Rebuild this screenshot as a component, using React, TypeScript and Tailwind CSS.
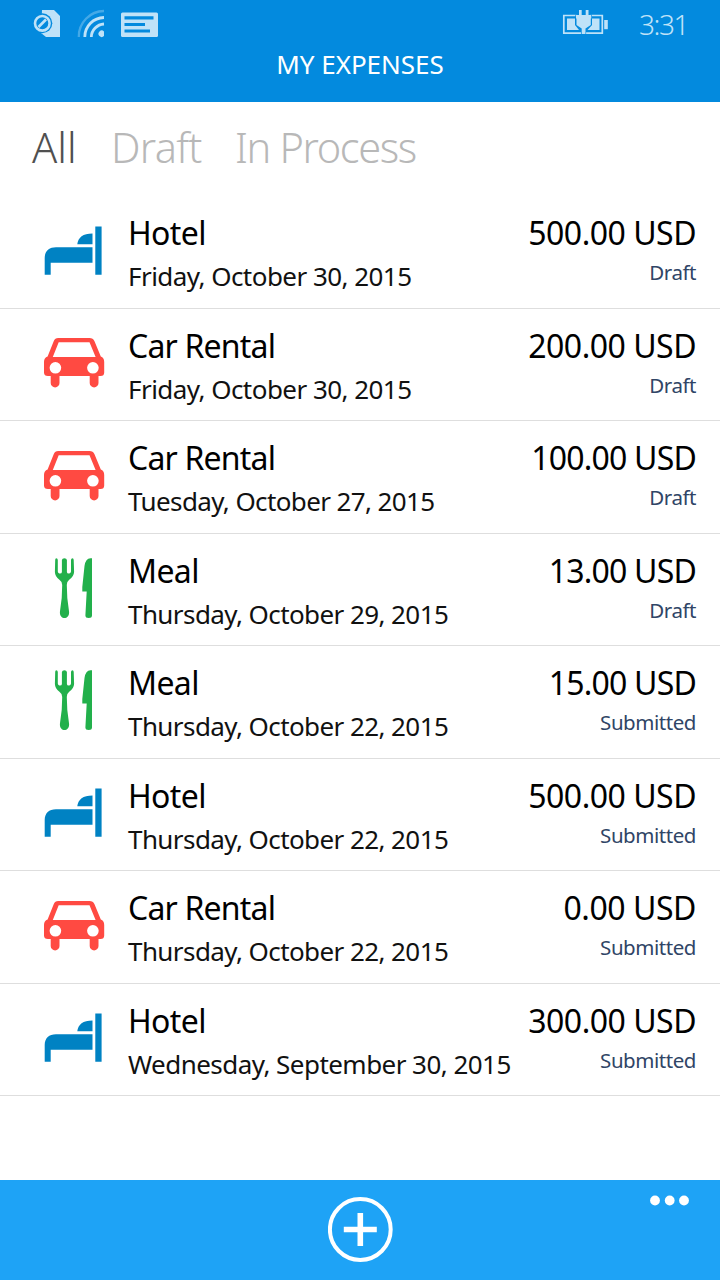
type Kind = 'hotel' | 'car' | 'meal';

interface Expense {
  kind: Kind;
  title: string;
  date: string;
  amount: string;
  status: string;
  dateSpacing: string;
  amountSpacing: string;
}

const expenses: Expense[] = [
  { kind: 'hotel', title: 'Hotel', date: 'Friday, October 30, 2015', amount: '500.00 USD', status: 'Draft', dateSpacing: 'tracking-[-0.54px]', amountSpacing: 'tracking-[-0.5px]' },
  { kind: 'car', title: 'Car Rental', date: 'Friday, October 30, 2015', amount: '200.00 USD', status: 'Draft', dateSpacing: 'tracking-[-0.54px]', amountSpacing: 'tracking-[-0.5px]' },
  { kind: 'car', title: 'Car Rental', date: 'Tuesday, October 27, 2015', amount: '100.00 USD', status: 'Draft', dateSpacing: 'tracking-[-0.61px]', amountSpacing: 'tracking-[-0.8px]' },
  { kind: 'meal', title: 'Meal', date: 'Thursday, October 29, 2015', amount: '13.00 USD', status: 'Draft', dateSpacing: 'tracking-[-0.58px]', amountSpacing: 'tracking-[-0.8px]' },
  { kind: 'meal', title: 'Meal', date: 'Thursday, October 22, 2015', amount: '15.00 USD', status: 'Submitted', dateSpacing: 'tracking-[-0.58px]', amountSpacing: 'tracking-[-0.8px]' },
  { kind: 'hotel', title: 'Hotel', date: 'Thursday, October 22, 2015', amount: '500.00 USD', status: 'Submitted', dateSpacing: 'tracking-[-0.58px]', amountSpacing: 'tracking-[-0.5px]' },
  { kind: 'car', title: 'Car Rental', date: 'Thursday, October 22, 2015', amount: '0.00 USD', status: 'Submitted', dateSpacing: 'tracking-[-0.58px]', amountSpacing: 'tracking-[-0.45px]' },
  { kind: 'hotel', title: 'Hotel', date: 'Wednesday, September 30, 2015', amount: '300.00 USD', status: 'Submitted', dateSpacing: 'tracking-[-0.54px]', amountSpacing: 'tracking-[-0.5px]' },
];

const titleSpacing: Record<Kind, string> = {
  hotel: 'tracking-[-0.6px]',
  car: 'tracking-[-0.8px]',
  meal: 'tracking-[-0.6px]',
};

function HotelIcon() {
  return (
    <svg viewBox="0 0 64 64" className="size-16" fill="#0082c3">
      <path d="M53.300 0.500h6.300v48.300H53.300zM50.500 7.500v10.800H35.300C36 11.500 41 7.500 50.500 7.500zM50.500 21.200v15.500H8.700v12.100H2.700V32C2.700 25 7 21.200 14 21.200z" />
    </svg>
  );
}

function CarIcon() {
  return (
    <svg viewBox="0 0 64 64" className="size-16" fill="#ff4a42">
      <path
        fillRule="evenodd"
        d="M16.200 0H47.500Q51 0 52.500 3.200L58.800 18.500Q62.200 19.800 62.200 24V34.500Q62.200 38 58.500 38H56.500V45A4.400 4.400 0 0 1 47.700 45V38H17.500V45A4.400 4.400 0 0 1 8.700 45V38H6Q2 38 2 34.500V24Q2 19.800 5.600 18.500L11.700 3.200Q13 0 16.200 0ZM16.700 4.300L10.800 19H53.600L47.500 4.300ZM13.400 24A5.800 5.800 0 1 0 13.400 35.600A5.800 5.800 0 1 0 13.400 24ZM50.900 24A5.800 5.800 0 1 0 50.900 35.600A5.800 5.800 0 1 0 50.900 24Z"
      />
    </svg>
  );
}

function MealIcon() {
  return (
    <svg viewBox="0 0 64 64" className="size-16" fill="#22b04b">
      <path d="M14.300 1.200Q15.700 1.200 15.800 3V14.500Q15.900 16.200 17.300 16.500Q19.800 16.800 19.900 15V3Q20.200 1.200 22.400 1.200Q24.600 1.200 24.900 3V15Q25 16.800 27.300 16.500Q28.900 16.200 29 14.500V3Q29.200 1.200 30.400 1.200Q31.700 1.200 31.700 3L32.100 15Q31.800 19.500 27.200 22.700Q24.700 24.500 24.800 28L25.300 41L27.100 55C27.400 63 17.600 63 17.900 55L19.700 41L20.200 28Q20.200 24.500 17.400 22.700Q13 19.500 12.900 15L13.200 3Q13.200 1.200 14.300 1.200Z" />
      <path d="M50 1.200V58.500Q50 61 46.700 61Q43.400 61 43.400 58.500L44.700 34.500H40.300V30L42.500 9Q43.600 1.200 48.500 1.200Z" />
    </svg>
  );
}

const icons: Record<Kind, () => React.JSX.Element> = { hotel: HotelIcon, car: CarIcon, meal: MealIcon };

function ExpenseRow({ item }: { item: Expense }) {
  const Icon = icons[item.kind];
  return (
    <li className="flex h-[112.5px] border-b border-[#dedede] pr-6 pl-[42px]">
      <div className={item.kind === 'meal' ? 'w-[86px] shrink-0 pt-[23px]' : 'w-[86px] shrink-0 pt-[29.500px]'}>
        <Icon />
      </div>
      <div className="flex grow flex-col whitespace-nowrap">
        <div className="flex h-[59.200px] items-end justify-between text-[32px] leading-[44px] font-[370] text-black">
          <span className={titleSpacing[item.kind]}>{item.title}</span>
          <span className={item.amountSpacing}>{item.amount}</span>
        </div>
        <div className="flex justify-between">
          <span className={'text-[26px] leading-[42px] font-[370] text-[#111] ' + item.dateSpacing}>{item.date}</span>
          <span className="text-[20.500px] leading-[34px] font-[370] tracking-[-0.45px] text-[#304566]">{item.status}</span>
        </div>
      </div>
    </li>
  );
}

function StatusBar() {
  return (
    <div className="flex h-12 items-start justify-between pr-[32px] pl-8 text-[#bfe2f8]">
      <svg viewBox="32 0 128 48" className="h-12 w-32" fill="none">
        <path d="M42 10H54L60 16V37H46L41 33Z" fill="currentColor" />
        <circle cx="42.300" cy="23.300" r="10" fill="#038ade" />
        <circle cx="42.300" cy="23.300" r="7.300" stroke="currentColor" strokeWidth="2.600" />
        <path d="M38.500 27L46 19.500" stroke="currentColor" strokeWidth="2.600" />
        <path d="M78.800 37A25.500 25.500 0 0 1 104 11" stroke="currentColor" strokeWidth="2.300" opacity="0.35" />
        <path d="M84.800 37A19.500 19.500 0 0 1 104 17.500M91.300 37A13.500 13.500 0 0 1 104 24" stroke="currentColor" strokeWidth="2.800" />
        <path d="M104 31.500V36A3.200 3.200 0 1 1 104 31.500Z" fill="currentColor" />
        <rect x="121" y="12.500" width="37" height="24.500" rx="1.500" fill="currentColor" />
        <path d="M124.500 17.800H153.500M124.500 24.500H145M124.500 31H150" stroke="#038ade" strokeWidth="3.200" />
      </svg>
      <div className="flex w-[126px]">
        <svg viewBox="562 0 48 48" className="h-12 w-12 shrink-0" fill="none">
          <path d="M577 15.500H563.800V33.200H581.500M590 15.500H602.300V33.200H585.500" stroke="currentColor" strokeWidth="1.700" />
          <path d="M567 18.500H575V25L579 30H567ZM599.500 18.500H592V25L587.500 30H599.500Z" fill="currentColor" />
          <path d="M576 15H579V10H581.700V15H585.700V10H588.500V15H591.300V18.500H590.800V25L585.500 28.500V34H581.700V28.500L576.500 25V18.500H576Z" fill="currentColor" stroke="#038ade" strokeWidth="1.200" paintOrder="stroke" />
          <rect x="604.200" y="20" width="3.600" height="9.200" fill="currentColor" />
        </svg>
        <span className="ml-[29px] text-[28px] leading-[48px] font-[360] tracking-[-1.4px]">3:31</span>
      </div>
    </div>
  );
}

export default function App() {
  return (
    <div className="flex h-[1280px] w-[720px] flex-col overflow-hidden bg-white font-['Noto_Sans','Open_Sans',sans-serif]">
      <header className="h-[102px] shrink-0 bg-[#038ade]">
        <StatusBar />
        <h1 className="text-center text-[26px] leading-[32px] font-[370] text-white">MY EXPENSES</h1>
      </header>
      <nav className="flex h-[94px] shrink-0 pl-8 text-[41.500px] leading-[90px] font-[330] whitespace-nowrap text-[#b8b8b8]">
        <span className="w-[79px] text-[#505050]">All</span>
        <span className="w-[124px] tracking-[-0.7px]">Draft</span>
        <span className="tracking-[-1.35px]">In Process</span>
      </nav>
      <ul className="grow">
        {expenses.map((item, i) => (
          <ExpenseRow key={i} item={item} />
        ))}
      </ul>
      <footer className="flex h-[100px] shrink-0 justify-between bg-[#1ea3f6] pr-[31px] pl-[328px] text-white">
        <svg viewBox="0 0 65 68" className="mt-4 h-[68px] w-[65px]" fill="none" stroke="currentColor">
          <circle cx="32.300" cy="33.500" r="30.400" strokeWidth="4" />
          <path d="M32.300 17V50M15.800 33.500H48.800" strokeWidth="5.600" />
        </svg>
        <svg viewBox="0 0 39 40" className="h-10 w-[39px]" fill="currentColor">
          <circle cx="5" cy="20.500" r="4.900" />
          <circle cx="19.700" cy="20.500" r="4.900" />
          <circle cx="34" cy="20.500" r="4.900" />
        </svg>
      </footer>
    </div>
  );
}
